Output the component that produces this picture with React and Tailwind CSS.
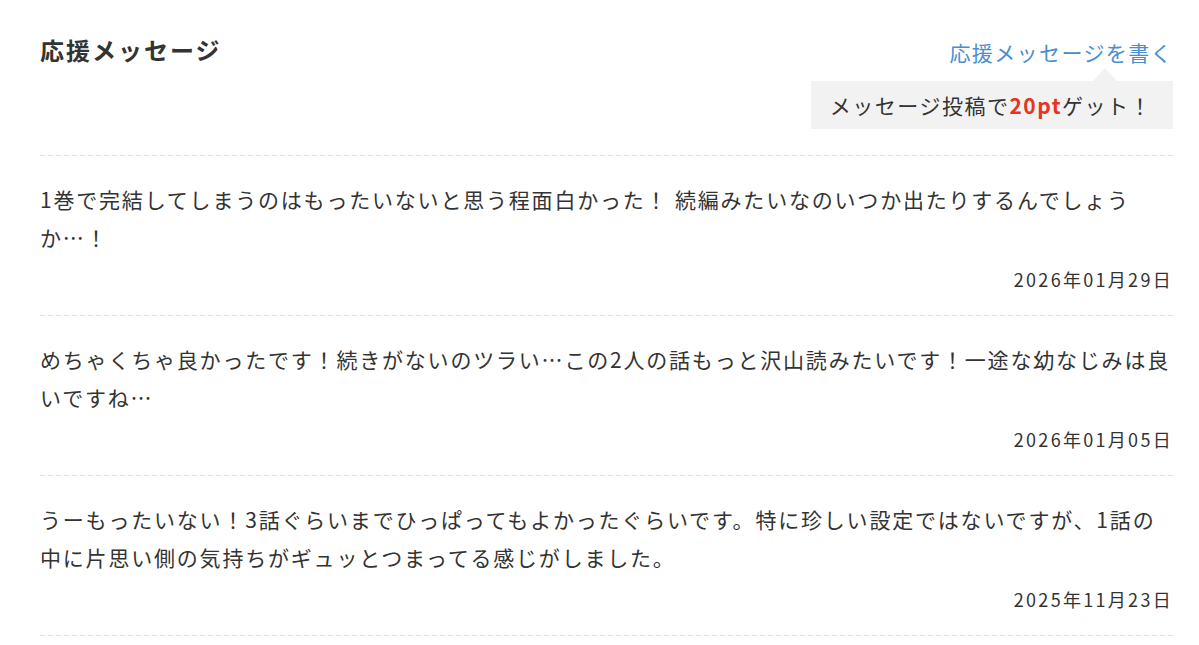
import React from "react";

const messages = [
  {
    lines: ["1巻で完結してしまうのはもったいないと思う程面白かった！ 続編みたいなのいつか出たりするんでしょう", "か…！"],
    date: "2026年01月29日",
  },
  {
    lines: ["めちゃくちゃ良かったです！続きがないのツラい…この2人の話もっと沢山読みたいです！一途な幼なじみは良", "いですね…"],
    date: "2026年01月05日",
  },
  {
    lines: ["うーもったいない！3話ぐらいまでひっぱってもよかったぐらいです。特に珍しい設定ではないですが、1話の", "中に片思い側の気持ちがギュッとつまってる感じがしました。"],
    date: "2025年11月23日",
  },
];

function Dashed() {
  return <div className="h-px w-full bg-[repeating-linear-gradient(to_right,#dcdcdc_0_5px,transparent_5px_8px)]" />;
}

export default function App() {
  return (
    <div className="min-h-screen bg-white pl-[40px] pr-[26px] pt-[36px] font-['Noto_Sans_CJK_JP','Noto_Sans',sans-serif] text-[#333]">
      <div className="flex items-start justify-between">
        <h2 className="text-[24px] font-bold leading-[28px] tracking-[2px]">応援メッセージ</h2>
        <div className="mt-px flex flex-col items-end">
          <a href="#" className="text-[21px] leading-[30px] tracking-[1.4px] text-[#4a8dce]">
            応援メッセージを書く
          </a>
          <div className="relative mt-[14px] mb-[26px] h-[48px] bg-[#f2f2f2] pl-[19px] pr-[21px] text-[21px] leading-[48px] tracking-[1.5px]">
            <span className="absolute -top-[13px] right-[56px] h-0 w-0 border-b-[13px] border-l-[12px] border-r-[12px] border-b-[#f2f2f2] border-l-transparent border-r-transparent" />
            メッセージ投稿で<span className="font-bold text-[#e8331e]">20pt</span>ゲット！
          </div>
        </div>
      </div>
      <Dashed />
      {messages.map((m) => (
        <div key={m.date}>
          <div className="pt-[24px] pb-[23px]">
            <p className="text-[21px] leading-[38px] tracking-[1.8px] whitespace-nowrap">
              {m.lines[0]}
              <br />
              {m.lines[1]}
            </p>
            <p className="mt-[10px] text-right text-[18px] leading-[26px] tracking-[2.3px]">{m.date}</p>
          </div>
          <Dashed />
        </div>
      ))}
    </div>
  );
}
